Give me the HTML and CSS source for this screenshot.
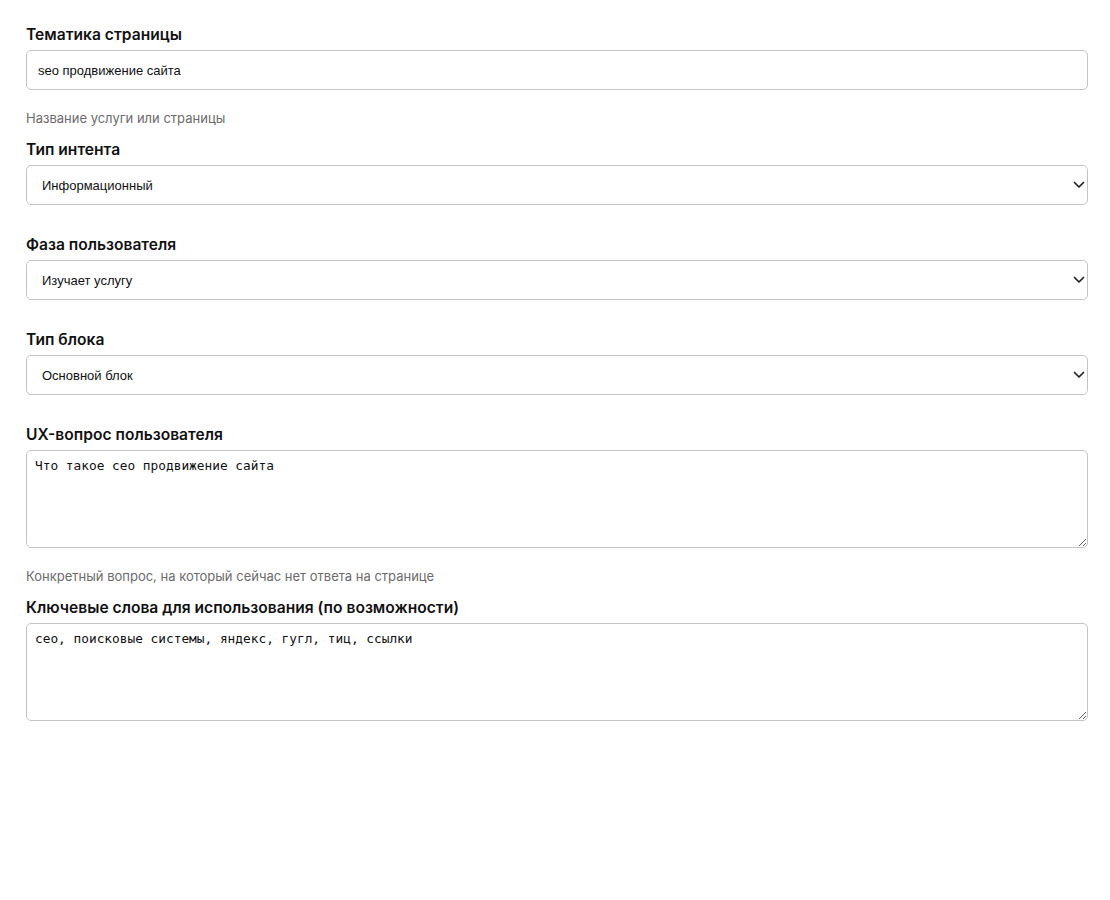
FILE: index.html
```html
<!DOCTYPE html>
<html lang="ru">
<head>
    <meta charset="UTF-8">
    <meta name="viewport" content="width=device-width, initial-scale=1.0">
    <title>Параметры блока</title>
    <link rel="stylesheet" href="styles.css">
</head>
<body>
    <div class="form">
        <div class="field has-hint">
            <label for="topic">Тематика страницы</label>
            <input type="text" id="topic" value="seo продвижение сайта">
            <p class="hint">Название услуги или страницы</p>
        </div>

        <div class="field">
            <label for="intent">Тип интента</label>
            <div class="select-wrap">
                <select id="intent">
                    <option>Информационный</option>
                    <option>Коммерческий</option>
                    <option>Навигационный</option>
                </select>
                <svg class="chevron" width="12" height="8" viewBox="0 0 12 8"><path d="M1.5 1.5 6 6l4.5-4.5" fill="none" stroke="#222" stroke-width="1.7" stroke-linecap="round" stroke-linejoin="round"/></svg>
            </div>
        </div>

        <div class="field">
            <label for="phase">Фаза пользователя</label>
            <div class="select-wrap">
                <select id="phase">
                    <option>Изучает услугу</option>
                    <option>Сравнивает варианты</option>
                    <option>Готов купить</option>
                </select>
                <svg class="chevron" width="12" height="8" viewBox="0 0 12 8"><path d="M1.5 1.5 6 6l4.5-4.5" fill="none" stroke="#222" stroke-width="1.7" stroke-linecap="round" stroke-linejoin="round"/></svg>
            </div>
        </div>

        <div class="field">
            <label for="block">Тип блока</label>
            <div class="select-wrap">
                <select id="block">
                    <option>Основной блок</option>
                    <option>FAQ</option>
                    <option>Вступление</option>
                </select>
                <svg class="chevron" width="12" height="8" viewBox="0 0 12 8"><path d="M1.5 1.5 6 6l4.5-4.5" fill="none" stroke="#222" stroke-width="1.7" stroke-linecap="round" stroke-linejoin="round"/></svg>
            </div>
        </div>

        <div class="field has-hint">
            <label for="question">UX-вопрос пользователя</label>
            <textarea id="question">Что такое сео продвижение сайта</textarea>
            <p class="hint">Конкретный вопрос, на который сейчас нет ответа на странице</p>
        </div>

        <div class="field">
            <label for="keywords">Ключевые слова для использования (по возможности)</label>
            <textarea id="keywords">сео, поисковые системы, яндекс, гугл, тиц, ссылки</textarea>
        </div>
    </div>
</body>
</html>
```

FILE: styles.css
```css
* { margin: 0; padding: 0; box-sizing: border-box; }
body { background: #fff; color: #111; font-family: 'Inter', 'Liberation Sans', sans-serif; padding: 25px 22px 0 26px; }

.form { display: flex; flex-direction: column; }
.field { display: flex; flex-direction: column; margin-bottom: 30px; }
.field.has-hint { margin-bottom: 14px; }

.field label {
    display: block;
    font-size: 15.6px;
    line-height: 20px;
    font-weight: 600;
    color: #111;
    margin-bottom: 5px;
}

input, select, textarea {
    width: 100%;
    border: 1px solid #c4c4c4;
    border-radius: 5px;
    background: #fff;
    color: #111;
    outline: none;
    font-size: 13px;
}
input, select {
    height: 40px;
    font-family: 'Liberation Sans', Arial, sans-serif;
}
input { padding: 0 11px; }

.select-wrap { position: relative; }
select {
    appearance: none;
    -webkit-appearance: none;
    padding: 0 30px 0 15px;
}
.chevron { position: absolute; right: 3px; top: 16px; pointer-events: none; }

textarea {
    height: 98px;
    padding: 7px 8px;
    font-family: 'DejaVu Sans Mono', monospace;
    font-size: 12.8px;
    line-height: 16px;
    resize: vertical;
}

.hint {
    margin-top: 20px;
    font-size: 13px;
    line-height: 16px;
    color: #6b6b6b;
}
```
